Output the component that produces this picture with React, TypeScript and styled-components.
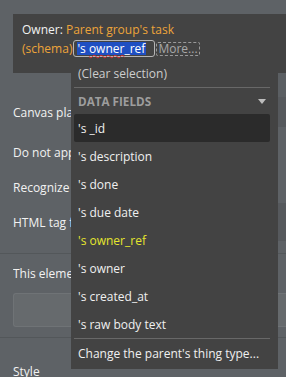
import React from 'react';
import styled, { createGlobalStyle } from 'styled-components';

const GlobalStyle = createGlobalStyle`
  html, body {
    margin: 0;
    padding: 0;
    background: #5e6266;
  }
`;

const SPage = styled.div`
  position: relative;
  width: 286px;
  height: 377px;
  overflow: hidden;
  background: #5e6266;
  font-family: 'Open Sans', 'Liberation Sans', sans-serif;
  font-size: 12px;
  color: #f2f2f2;
`;

const SProps = styled.div`
  display: flex;
  flex-direction: column;
  padding-top: 73px;
`;

const SRow = styled.div<{ $h: number }>`
  height: ${(p) => p.$h}px;
  display: flex;
  align-items: center;
  justify-content: space-between;
  padding-left: 13px;
  white-space: nowrap;
`;

// the menu covers the rest of each label
const SLabel = styled.span`
  color: #f2f2f2;
  max-width: 58px;
  overflow: hidden;
`;

const SField = styled.div<{ $bg: string; $h: number }>`
  width: 120px;
  height: ${(p) => p.$h}px;
  background: ${(p) => p.$bg};
  color: #b8bcbf;
  display: flex;
  align-items: center;
  padding-left: 6px;
  box-sizing: border-box;
  position: relative;
`;

const SCaret = styled.span`
  position: absolute;
  left: 6px;
  top: 50%;
  width: 2px;
  height: 9px;
  margin-top: -5px;
  background: linear-gradient(90deg, #e8d46a 50%, #8fc6e8 50%);
`;

const SDivider = styled.div<{ $mt: number }>`
  height: 1px;
  margin-top: ${(p) => p.$mt}px;
  background: #53575a;
`;

const SBox = styled.div`
  margin: 1px 0 0 13px;
  height: 34px;
  box-sizing: border-box;
  background: #666a6d;
  border: 1px solid #6f7376;
  border-right: none;
  border-radius: 3px 0 0 3px;
`;

const SPopup = styled.div`
  position: absolute;
  left: 13px;
  top: 14px;
  right: 0;
  height: 59px;
  box-sizing: border-box;
  background: #434343;
  padding: 6px 9px;
  line-height: 19px;
  white-space: nowrap;
`;

const SOrange = styled.span`
  color: #eda33a;
`;

const SInput = styled.span`
  display: inline-flex;
  align-items: center;
  height: 17px;
  width: 82px;
  box-sizing: border-box;
  margin-left: 1px;
  padding: 0 3px;
  border: 1px solid #b5b5b5;
  border-radius: 3px;
  vertical-align: middle;
  position: relative;
  top: -1px;
`;

const SSelected = styled.span`
  background: #1f4fc2;
  color: #ffffff;
  line-height: 13px;
  padding-right: 1px;
`;

const SSpell = styled.span`
  text-decoration: underline wavy #e0282b;
  text-decoration-thickness: 1px;
  text-underline-offset: 1px;
`;

const SMore = styled.span`
  display: inline-block;
  margin-left: 1px;
  padding: 0 1px;
  line-height: 12px;
  border: 1px dashed #9a9a9a;
  border-radius: 2px;
  color: #a8a8a8;
  vertical-align: middle;
  position: relative;
  top: -1px;
`;

const SMenu = styled.div`
  position: absolute;
  left: 71px;
  top: 59px;
  width: 207px;
  height: 310px;
  box-sizing: border-box;
  background: #434343;
  padding: 0 8px 0 3px;
  display: flex;
  flex-direction: column;
`;

const SItem = styled.div<{ $active?: boolean; $color?: string }>`
  height: 28px;
  flex-shrink: 0;
  display: flex;
  align-items: center;
  padding-left: 4px;
  border-radius: 2px;
  white-space: nowrap;
  color: ${(p) => p.$color || '#f0f0f0'};
  background: ${(p) => (p.$active ? '#2b2b2b' : 'transparent')};
`;

const SSep = styled.div`
  height: 1px;
  flex-shrink: 0;
  background: #686868;
`;

const SHeader = styled.div`
  height: 26px;
  flex-shrink: 0;
  display: flex;
  align-items: center;
  justify-content: space-between;
  padding: 0 4px;
  font-size: 11.7px;
  font-weight: 700;
  color: #9d9d9d;
`;

const STriangle = styled.span`
  width: 0;
  height: 0;
  border-left: 4.5px solid transparent;
  border-right: 4.5px solid transparent;
  border-top: 5px solid #bdbdbd;
`;

const fields = [
  "'s _id",
  "'s description",
  "'s done",
  "'s due date",
  "'s owner_ref",
  "'s owner",
  "'s created_at",
  "'s raw body text",
];

const App = () => {
  return (
    <SPage>
      <GlobalStyle />
      <SProps>
        <SRow $h={24}>
          <span />
          <SField $bg='#5b5f63' $h={24}>: e</SField>
        </SRow>
        <SRow $h={30}>
          <SLabel>Canvas placement</SLabel>
          <SField $bg='#56595d' $h={30} />
        </SRow>
        <SRow $h={50}>
          <SLabel>Do not apply layout</SLabel>
        </SRow>
        <SRow $h={20}>
          <SLabel>Recognize as header</SLabel>
        </SRow>
        <SRow $h={50}>
          <SLabel>HTML tag for this element</SLabel>
          <SField $bg='#56595d' $h={38}>
            <SCaret />
          </SField>
        </SRow>
        <SDivider $mt={6} />
        <SRow $h={38}>
          <SLabel>This element is a repeating group</SLabel>
        </SRow>
        <SBox />
        <SDivider $mt={10} />
        <SRow $h={66}>
          <SLabel>Style</SLabel>
        </SRow>
      </SProps>

      <SPopup>
        <div>
          Owner: <SOrange>Parent group's task</SOrange>
        </div>
        <div>
          <SOrange>(schema)</SOrange>
          <SInput>
            <SSelected>
              's <SSpell>owner</SSpell>_ref
            </SSelected>
          </SInput>
          <SMore>More...</SMore>
        </div>
      </SPopup>

      <SMenu>
        <SItem $color='#cdcdcd'>(Clear selection)</SItem>
        <SSep />
        <SHeader>
          DATA FIELDS
          <STriangle />
        </SHeader>
        {fields.map((f, i) => (
          <SItem
            key={f}
            $active={i === 0}
            $color={f === "'s owner_ref" ? '#e6e62e' : undefined}>
            {f}
          </SItem>
        ))}
        <SSep />
        <SItem>Change the parent's thing type...</SItem>
      </SMenu>
    </SPage>
  );
};

export default App;
